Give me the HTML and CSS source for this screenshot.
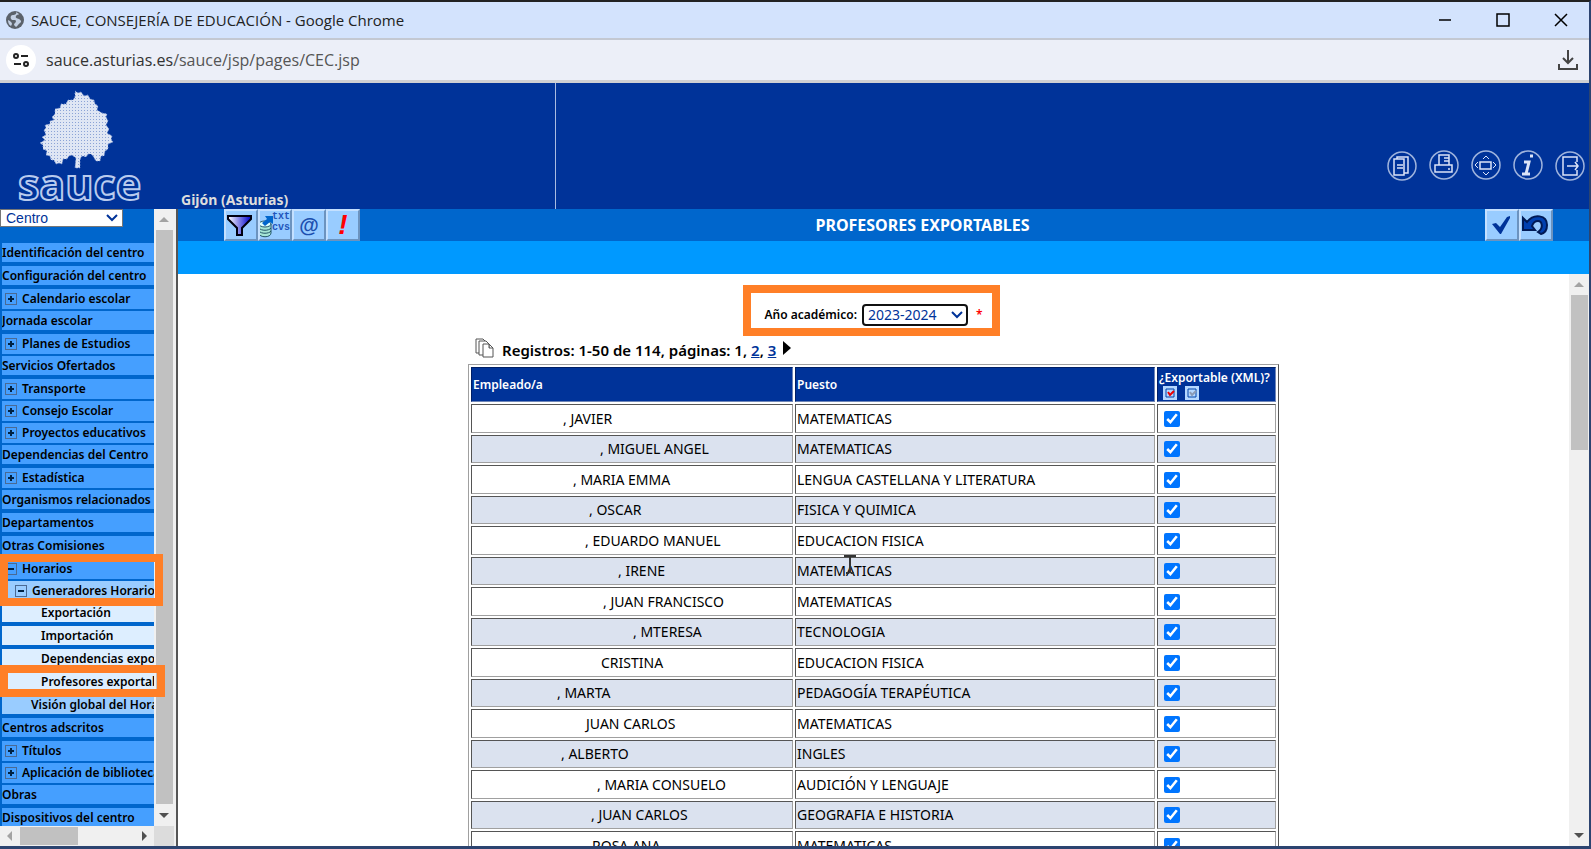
FILE: index.html
```
<!DOCTYPE html>
<html lang="es">
<head>
    <meta charset="UTF-8">
    <meta name="viewport" content="width=device-width, initial-scale=1.0">
    <title>SAUCE, CONSEJERÍA DE EDUCACIÓN</title>
    <link rel="stylesheet" href="styles.css">
</head>
<body>
    <div class="window">
        <div class="titlebar">
            <svg class="globe" width="18" height="18" viewBox="0 0 18 18"><circle cx="9" cy="9" r="9" fill="#5b626b"/><path d="M10 1c1 2-1 3-3 3S4 6 5 8s5 0 5 2-2 2-2 4l2 2c2-1 2-3 4-4s1-3-1-4-4-1-3-3 3-1 3-2zM2 9c2 1 4 2 4 4l-1 2C3 14 2 12 2 9z" fill="#c3d0e4"/></svg>
            <span class="window-title">SAUCE, CONSEJERÍA DE EDUCACIÓN - Google Chrome</span>
            <div class="window-buttons">
                <button aria-label="Minimizar"><svg width="14" height="14" viewBox="0 0 14 14"><path d="M1 7h12"/></svg></button>
                <button aria-label="Maximizar"><svg width="14" height="14" viewBox="0 0 14 14"><path d="M1 1h12v12H1z"/></svg></button>
                <button aria-label="Cerrar"><svg width="14" height="14" viewBox="0 0 14 14"><path d="M1 1l12 12M13 1L1 13"/></svg></button>
            </div>
        </div>
        <div class="urlbar">
            <button class="site-info" aria-label="Información del sitio">
                <svg width="16" height="14" viewBox="0 0 16 14" fill="none" stroke="#222" stroke-width="2"><circle cx="3" cy="3" r="2"/><path d="M8 3h7M1 11h7"/><circle cx="13" cy="11" r="2"/></svg>
            </button>
            <span class="url"><b>sauce.asturias.es</b>/sauce/jsp/pages/CEC.jsp</span>
            <button class="download" aria-label="Descargas">
                <svg width="20" height="20" viewBox="0 0 20 20" fill="none" stroke="#444" stroke-width="2"><path d="M10 0v13M5 8l5 5 5-5M1 14v5h18v-5"/></svg>
            </button>
        </div>

        <header class="header">
            <div class="logo">
                <svg width="160" height="126" viewBox="0 0 160 126">
                    <defs>
                        <pattern id="dots" width="3" height="3" patternUnits="userSpaceOnUse"><rect width="1" height="1" fill="#8ba3d6"/></pattern>
                        <path id="tree" d="M75 8l3 2 3-1 3 4 4-1 2 4 4 1 1 4 3 2-1 4 5 3 5 1-1 3 2 4-2 4 3 4-2 4 5 3-1 3 2 3-5 2 0 5-3 2-1 5-3 0-1 5-4 0-3-5-2-2-3 0-2 3-3-1-2 1-1 3 0 8h-5l1-10-4-3-3 1-2 3-4 0-1 5-3-1-3 1-2-4-3 0-1-4-4-1 1-4-4-2 0-4-3-2 5-3-3-3 4-2-2-5 2-2-1-3 5-1 0-3 4-1-2-3 3-3 0-5 5-1 1-4 5 0 2-4 5 0 2-3z"/>
                    </defs>
                    <use href="#tree" fill="#dfe6f4" stroke="#8ba3d6" stroke-dasharray="1 2"/>
                    <use href="#tree" fill="url(#dots)"/>
                    <text x="18" y="117" class="logo-text">sauce</text>
                </svg>
            </div>
            <div class="school">Gijón (Asturias)</div>
            <nav class="header-icons">
                <a href="#" aria-label="Documentos"><svg viewBox="0 0 31 31"><circle cx="15" cy="16" r="14"/><path d="M7 9h10v16H7zM10 9V7h11v16h-4M10 15h6M10 18h6"/></svg></a>
                <a href="#" aria-label="Imprimir"><svg viewBox="0 0 31 31"><circle cx="15" cy="15" r="14"/><path d="M10 15V5h10v10M6 15h17v7H6zM15 8h5M15 11h5M19 19h2"/></svg></a>
                <a href="#" aria-label="Ampliar"><svg viewBox="0 0 31 31"><circle cx="15" cy="15" r="14"/><path d="M9 12h11v7H9z"/><path d="M12 9l3-3 3 3M12 22l3 3 3-3M7 12l-3 3 3 3M22 12l3 3-3 3" class="thin"/></svg></a>
                <a href="#" aria-label="Información"><svg viewBox="0 0 31 31"><circle cx="15" cy="15" r="14"/><path d="M11 12h5l-3 12M9 24h8" class="thick"/><path d="M17 6h3" class="thick"/></svg></a>
                <a href="#" aria-label="Salir"><svg viewBox="0 0 31 31"><circle cx="15" cy="16" r="14"/><path d="M22 12V7H8v18h14v-5M12 16h11M20 12l3 4-3 4"/></svg></a>
            </nav>
        </header>

        <div class="frames">
            <aside class="sidebar">
                <div class="sidebar-view">
                    <span class="select select-centro">
                        <select aria-label="Perfil"><option>Centro</option></select>
                        <svg width="12" height="8" viewBox="0 0 12 8"><path d="M1 1l5 5 5-5"/></svg>
                    </span>
                    <ul class="menu" id="menu"></ul>
                </div>
                <div class="scroll scroll-v">
                    <i class="arrow up off"></i><i class="thumb"></i><i class="arrow down"></i>
                </div>
                <div class="scroll scroll-h">
                    <i class="arrow left off"></i><i class="thumb"></i><i class="arrow right"></i>
                </div>
                <div class="corner"></div>
                <div class="mark mark-horarios"></div>
                <div class="mark mark-profesores"></div>
            </aside>

            <main class="main">
                <div class="toolbar">
                    <div class="tools">
                        <button aria-label="Filtrar"><svg width="33" height="32" viewBox="0 0 33 32"><defs><linearGradient id="funnel"><stop offset="0" stop-color="#fff"/><stop offset="1" stop-color="#0000d0"/></linearGradient></defs><path d="M4 7h23v3l-9 9v7h-5v-7L4 10z" fill="url(#funnel)" stroke="#001" stroke-width="2"/></svg></button>
                        <button aria-label="Exportar datos"><svg width="33" height="32" viewBox="0 0 33 32"><path d="M1 15v9c0 5 12 5 12 0v-9z" fill="#a5e5d5" stroke="#256" /><ellipse cx="7" cy="15" rx="6" ry="3" fill="#dff" stroke="#256"/><path d="M1 19c2 3 10 3 12 0M1 22c2 3 10 3 12 0" fill="none" stroke="#256"/><path d="M4 14l5-4-2-3h8v8l-3-2-5 4z" fill="#0066cc"/><text x="14" y="10" class="tool-text">txt</text><text x="14" y="21" class="tool-text">cvs</text></svg></button>
                        <button class="at" aria-label="Correo">@</button>
                        <button class="bang" aria-label="Avisos">!</button>
                    </div>
                    <h1>PROFESORES EXPORTABLES</h1>
                    <div class="tools tools-right">
                        <button aria-label="Aceptar"><svg width="33" height="32" viewBox="0 0 33 32"><path d="M7 15l4-1 4 4 7-10 3-1v2l-9 16h-1z" fill="#003399"/></svg></button>
                        <button aria-label="Volver"><svg width="33" height="32" viewBox="0 0 33 32"><path d="M4 9l4 4c7-9 20-7 20 3 0 5-2 8-6 9l-3-2c6-4 4-11 0-11-3 0-5 2-6 5l3 4H4z" fill="#0040b0" stroke="#001a55" stroke-width="2"/></svg></button>
                    </div>
                </div>
                <div class="subbar"></div>
                <div class="content">
                    <div class="page">
                        <form class="filter">
                            <label for="anio">Año académico:</label>
                            <span class="select select-anio">
                                <select id="anio"><option>2023-2024</option></select>
                                <svg width="12" height="8" viewBox="0 0 12 8"><path d="M1 1l5 5 5-5"/></svg>
                            </span>
                            <span class="required">*</span>
                        </form>
                        <div class="pager">
                            <svg width="20" height="20" viewBox="0 0 20 20" fill="#fff" stroke="#555"><path d="M1 1h7l3 3v11H1z"/><path d="M4 3h7l3 3v11H4z"/><path d="M8 6h6l4 4v9H8zM14 6v4h4"/></svg>
                            <span>Registros: 1-50 de 114, páginas: 1, <a href="#">2</a>, <a href="#">3</a></span>
                            <a href="#" class="next" aria-label="Siguiente"></a>
                        </div>
                        <table class="grid">
                            <colgroup><col class="c-name"><col class="c-job"><col class="c-xml"></colgroup>
                            <thead>
                                <tr>
                                    <th>Empleado/a</th>
                                    <th>Puesto</th>
                                    <th>¿Exportable (XML)?
                                        <div class="all">
                                            <button aria-label="Marcar todos"><svg width="14" height="14" viewBox="0 0 14 14"><path d="M3 3h8v8H3z" fill="none" stroke="#0044aa"/><path d="M5 6l2 3 4-4" fill="none" stroke="#e00" stroke-width="2"/></svg></button>
                                            <button aria-label="Desmarcar todos"><svg width="14" height="14" viewBox="0 0 14 14"><path d="M3 3h8v8H3z" fill="none" stroke="#0044aa"/><path d="M5 6l2 3 4-4" fill="none" stroke="#8a9ab5" stroke-width="2"/></svg></button>
                                        </div>
                                    </th>
                                </tr>
                            </thead>
                            <tbody id="rows"></tbody>
                        </table>
                        <svg class="cursor" width="12" height="20" viewBox="0 0 12 20"><path d="M0 1h12M6 2v16M2 18h3M7 18h3"/></svg>
                    </div>
                    <div class="scroll scroll-v scroll-main">
                        <i class="arrow up off"></i><i class="thumb"></i><i class="arrow down"></i>
                    </div>
                </div>
            </main>
        </div>
    </div>

    <script>
        // [texto, nivel, estado del nodo]
        const menu = [
            ["Identificación del centro", 1],
            ["Configuración del centro", 1],
            ["Calendario escolar", 1, "plus"],
            ["Jornada escolar", 1],
            ["Planes de Estudios", 1, "plus"],
            ["Servicios Ofertados", 1],
            ["Transporte", 1, "plus"],
            ["Consejo Escolar", 1, "plus"],
            ["Proyectos educativos", 1, "plus"],
            ["Dependencias del Centro", 1],
            ["Estadística", 1, "plus"],
            ["Organismos relacionados", 1],
            ["Departamentos", 1],
            ["Otras Comisiones", 1],
            ["Horarios", 1, "minus"],
            ["Generadores Horarios", 2, "minus"],
            ["Exportación", 3],
            ["Importación", 3],
            ["Dependencias exportables", 3],
            ["Profesores exportables", 3],
            ["Visión global del Horario", 2],
            ["Centros adscritos", 1],
            ["Títulos", 1, "plus"],
            ["Aplicación de bibliotecas", 1, "plus"],
            ["Obras", 1],
            ["Dispositivos del centro", 1]
        ];

        // hueco: ancho de los apellidos ocultos
        const rows = [
            { hueco: 90, nombre: ", JAVIER", puesto: "MATEMATICAS" },
            { hueco: 127, nombre: ", MIGUEL ANGEL", puesto: "MATEMATICAS" },
            { hueco: 100, nombre: ", MARIA EMMA", puesto: "LENGUA CASTELLANA Y LITERATURA" },
            { hueco: 116, nombre: ", OSCAR", puesto: "FISICA Y QUIMICA" },
            { hueco: 112, nombre: ", EDUARDO MANUEL", puesto: "EDUCACION FISICA" },
            { hueco: 145, nombre: ", IRENE", puesto: "MATEMATICAS" },
            { hueco: 130, nombre: ", JUAN FRANCISCO", puesto: "MATEMATICAS" },
            { hueco: 160, nombre: ", MTERESA", puesto: "TECNOLOGIA" },
            { hueco: 128, nombre: "CRISTINA", puesto: "EDUCACION FISICA" },
            { hueco: 84, nombre: ", MARTA", puesto: "PEDAGOGÍA TERAPÉUTICA" },
            { hueco: 113, nombre: "JUAN CARLOS", puesto: "MATEMATICAS" },
            { hueco: 88, nombre: ", ALBERTO", puesto: "INGLES" },
            { hueco: 124, nombre: ", MARIA CONSUELO", puesto: "AUDICIÓN Y LENGUAJE" },
            { hueco: 118, nombre: ", JUAN CARLOS", puesto: "GEOGRAFIA E HISTORIA" },
            { hueco: 119, nombre: "ROSA ANA", puesto: "MATEMATICAS" }
        ];

        document.getElementById('menu').innerHTML = menu.map(([texto, nivel, nodo]) =>
            `<li class="level-${nivel} ${nodo ? 'node' : ''}"><a href="#">${nodo ? `<i class="${nodo}"></i>` : ''}${texto}</a></li>`
        ).join('');

        document.getElementById('rows').innerHTML = rows.map(r =>
            `<tr><td><span class="hueco" style="width:${r.hueco}px"></span>${r.nombre}</td><td>${r.puesto}</td><td><input type="checkbox" aria-label="Exportable" checked></td></tr>`
        ).join('');
    </script>
</body>
</html>
```
FILE: styles.css
```
:root {
    --navy: #003399;
    --blue: #0066cc;
    --sky: #0099ff;
    --mark: #ff7f27;
    --ui: "Open Sans", "Noto Sans", sans-serif;
    --text: "Noto Sans", "Open Sans", sans-serif;
}

* {
    box-sizing: border-box;
    margin: 0;
    padding: 0;
}

body {
    font-family: var(--text);
    color: #000;
    height: 100vh;
    overflow: hidden;
}

button {
    border: none;
    background: none;
    cursor: pointer;
}

.window {
    display: flex;
    flex-direction: column;
    height: 100vh;
    border: solid #2c4470;
    border-width: 2px 2px 3px 0;
    border-top-color: #222;
}

/* ventana del navegador */
.titlebar {
    display: flex;
    align-items: center;
    gap: 7px;
    height: 38px;
    padding: 0 21px 0 6px;
    background: #d3e3fd;
    border-bottom: 2px solid #c3c8d2;
    font: 15px var(--ui);
    color: #222;
}

.window-buttons {
    display: flex;
    gap: 44px;
    margin-left: auto;
}

.window-buttons button {
    width: 14px;
    height: 14px;
}

.window-buttons path {
    fill: none;
    stroke: #000;
    stroke-width: 1.5;
}

.urlbar {
    display: flex;
    align-items: center;
    gap: 10px;
    height: 43px;
    padding: 0 11px 0 6px;
    background: #eceff8;
    border-bottom: 3px solid #cfd0d3;
    font: 16px var(--ui);
    color: #555;
}

.url b {
    font-weight: normal;
    color: #333;
}

.site-info {
    width: 30px;
    height: 30px;
    border-radius: 50%;
    background: #fff;
}

.download {
    width: 20px;
    height: 20px;
    margin-left: auto;
}

svg {
    display: block;
}

.site-info svg {
    margin: 0 auto;
}

/* cabecera */
.header {
    display: flex;
    height: 126px;
    background: var(--navy);
}

.logo {
    width: 178px;
}

.logo-text {
    font: bold 43px var(--ui);
    fill: var(--navy);
    stroke: #b9cbee;
    stroke-width: 2px;
}

.school {
    display: flex;
    align-items: flex-end;
    width: 378px;
    padding-left: 3px;
    border-right: 1px solid #a9bbe0;
    font-size: 14px;
    line-height: 18px;
    font-weight: 700;
    color: #ddd;
}

.header-icons {
    display: flex;
    align-items: center;
    gap: 11px;
    margin-left: auto;
    padding: 38px 3px 0 0;
}

.header-icons svg {
    width: 31px;
    height: 31px;
    fill: none;
    stroke: #dbe4f8;
    stroke-width: 1.5;
}

.header-icons circle {
    stroke: #9fb4dd;
}

.header-icons .thin {
    stroke-width: 1;
}

.header-icons .thick {
    stroke-width: 3;
}

/* marcos */
.frames {
    display: flex;
    flex: 1;
    min-height: 0;
}

.sidebar {
    position: relative;
    display: grid;
    grid-template: minmax(0, 1fr) 20px / 154px 20px;
    width: 178px;
    background: #f0f0f0;
    border-right: 2px solid #555;
}

.sidebar-view {
    overflow: hidden;
    background: var(--blue);
}

.select {
    position: relative;
    display: block;
}

.select select {
    display: block;
    appearance: none;
    width: 100%;
    height: 100%;
    background: #fff;
    color: var(--navy);
}

.select svg {
    position: absolute;
    top: 50%;
    right: 5px;
    margin-top: -4px;
    fill: none;
    stroke: var(--navy);
    stroke-width: 2;
    pointer-events: none;
}

.select-centro {
    width: 123px;
    height: 18px;
    margin-bottom: 16px;
}

.select-centro select {
    padding-left: 5px;
    border: 1px solid #777;
    font: 14px/16px "Liberation Sans", sans-serif;
}

.menu {
    list-style: none;
    padding-left: 2px;
}

.menu li {
    height: 19px;
    margin-bottom: 4px;
    background: #459fff;
    font-size: 12px;
    line-height: 19px;
    font-weight: 600;
    white-space: nowrap;
    overflow: hidden;
}

.menu li.node {
    height: 20px;
    margin-bottom: 2px;
    line-height: 20px;
}

.menu a {
    display: flex;
    align-items: center;
    color: #000;
    text-decoration: none;
}

.menu .level-2 {
    background: #99ccff;
    padding-left: 29px;
}

.menu .level-2.node {
    padding-left: 10px;
}

.menu .level-3 {
    background: #ddeeff;
    padding-left: 39px;
}

.plus,
.minus {
    flex: none;
    width: 12px;
    height: 12px;
    margin: 0 5px 0 3px;
    border: 1px solid #4a6a94;
    background: linear-gradient(#024, #024) center / 6px 2px no-repeat;
}

.plus {
    background: linear-gradient(#024, #024) center / 6px 2px no-repeat,
        linear-gradient(#024, #024) center / 2px 6px no-repeat;
}

/* barras de desplazamiento */
.scroll {
    display: flex;
    align-items: center;
    background: #f0f0f0;
}

.scroll-v {
    flex-direction: column;
    padding: 8px 0;
}

.scroll-v .thumb {
    flex: 1;
    width: 17px;
    margin: 8px 0 9px;
    background: #c1c1c1;
}

.scroll-main {
    width: 20px;
}

.scroll-main .thumb {
    flex: none;
    height: 155px;
    margin-bottom: auto;
}

.scroll-h {
    padding: 0 7px;
}

.scroll-h .thumb {
    width: 58px;
    height: 18px;
    margin: 0 auto 0 8px;
    background: #c1c1c1;
}

.corner {
    background: #dcdcdc;
}

.arrow {
    border: 5px solid transparent;
}

.arrow.up {
    border-top: 0;
    border-bottom-color: #505050;
}

.arrow.down {
    border-bottom: 0;
    border-top-color: #505050;
}

.arrow.left {
    border-left: 0;
    border-right-color: #505050;
}

.arrow.right {
    border-right: 0;
    border-left-color: #505050;
}

.arrow.up.off {
    border-bottom-color: #a3a3a3;
}

.arrow.left.off {
    border-right-color: #a3a3a3;
}

/* recuadros de la guía */
.mark {
    position: absolute;
    left: 0;
    border: 8px solid var(--mark);
    pointer-events: none;
}

.mark-horarios {
    top: 345px;
    width: 163px;
    height: 52px;
}

.mark-profesores {
    top: 456px;
    width: 165px;
    height: 32px;
}

/* zona principal */
.main {
    display: flex;
    flex: 1;
    flex-direction: column;
    min-width: 0;
    background: #fff;
}

.toolbar {
    display: flex;
    align-items: center;
    height: 32px;
    padding: 0 36px 0 46px;
    background: var(--blue);
}

.toolbar h1 {
    flex: 1;
    text-align: center;
    font-size: 16px;
    font-weight: 700;
    color: #fff;
}

.tools {
    display: flex;
}

.tools button {
    width: 34px;
    height: 32px;
    background: #99ccff;
    border: 2px solid;
    border-color: #c4e0ff #6c93bf #6c93bf #c4e0ff;
    overflow: hidden;
}

.tools svg {
    margin: -2px;
}

.tool-text {
    font: bold 10px "Liberation Mono", monospace;
    fill: #2255bb;
}

.tools .at {
    font: bold 20px/24px "Liberation Sans", sans-serif;
    color: #1c4fae;
}

.tools .bang {
    font: italic bold 28px/26px "Liberation Sans", sans-serif;
    color: #f00;
}

.subbar {
    height: 33px;
    background: var(--sky);
}

.content {
    display: flex;
    flex: 1;
    min-height: 0;
}

.page {
    position: relative;
    display: flex;
    flex: 1;
    flex-direction: column;
    align-items: center;
    padding-top: 11px;
    overflow: hidden;
}

.filter {
    display: flex;
    flex: none;
    align-items: center;
    gap: 5px;
    height: 51px;
    padding: 8px 9px 0 13px;
    margin-right: 4px;
    border: 8px solid var(--mark);
    font-size: 12px;
    font-weight: 600;
}

.select-anio {
    width: 106px;
    height: 22px;
}

.select-anio select {
    padding-left: 4px;
    border: 2px solid #111;
    border-radius: 4px;
    font: 14px/18px var(--text);
}

.required {
    margin-left: 3px;
    color: #f00;
}

.pager {
    display: flex;
    flex: none;
    align-items: center;
    gap: 7px;
    width: 811px;
    height: 28px;
    padding: 0 0 4px 7px;
    font-size: 15px;
    font-weight: 600;
}

.pager span {
    padding-top: 4px;
}

.pager a {
    color: var(--navy);
}

.next {
    border: 7px solid transparent;
    border-left: 8px solid #000;
    border-right: 0;
}

.grid {
    flex: none;
    width: 811px;
    table-layout: fixed;
    border: 1px solid #808080;
    border-color: #a0a0a0 #555 #555 #a0a0a0;
    border-spacing: 2px;
    font-size: 14px;
}

.c-name {
    width: 322px;
}

.c-job {
    width: 360px;
}

.grid th,
.grid td {
    border: 1px solid;
    border-color: #555 #a0a0a0 #a0a0a0 #555;
    padding: 0 1px;
    text-align: left;
    white-space: nowrap;
}

.grid th {
    height: 35px;
    background: var(--navy);
    border-color: #001f66 #6f86b8 #6f86b8 #001f66;
    color: #fff;
    font-size: 12px;
    line-height: 16px;
    font-weight: 600;
}

.grid td {
    height: 29px;
    line-height: 20px;
}

.grid tr:nth-child(even) td {
    height: 28px;
    background: #dbe2ef;
}

.hueco {
    display: inline-block;
}

.grid input {
    display: block;
    width: 16px;
    height: 16px;
    margin-left: 5px;
}

.all {
    display: flex;
    gap: 8px;
    padding-left: 4px;
}

.all button {
    width: 14px;
    height: 14px;
    background: #b5d8ff;
}

.cursor {
    position: absolute;
    left: 666px;
    top: 281px;
    fill: none;
    stroke: #333;
    stroke-width: 2;
}
```
